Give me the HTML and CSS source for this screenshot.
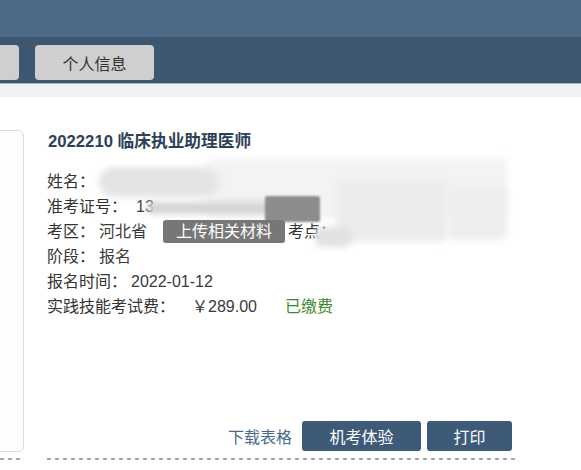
FILE: index.html
```html
<!DOCTYPE html>
<html lang="zh">
<head>
<meta charset="utf-8">
<link rel="stylesheet" href="styles.css">
</head>
<body>
<div class="top"></div>
<nav class="nav">
  <div class="tab tab-cut"></div>
  <div class="tab">个人信息</div>
</nav>
<div class="band"></div>
<main class="main">
  <div class="side">
    <div class="card"></div>
  </div>
  <section class="detail">
    <div class="box">
      <h2 class="title">2022210 临床执业助理医师</h2>
      <div class="rows">
        <div class="row"><span class="lab">姓名：</span><span class="val"></span></div>
        <div class="row"><span class="lab">准考证号：</span><span class="val id">13</span></div>
        <div class="row"><span class="lab">考区：</span><span class="val">河北省</span><span class="upload">上传相关材料</span><span class="lab">考点：</span></div>
        <div class="row"><span class="lab">阶段：</span><span class="val">报名</span></div>
        <div class="row"><span class="lab">报名时间：</span><span class="val">2022-01-12</span></div>
        <div class="row"><span class="lab">实践技能考试费：</span><span class="val fee">￥289.00</span><span class="paid">已缴费</span></div>
      </div>
      <div class="mask m2"></div>
      <div class="mask m6"></div>
      <div class="mask m7"></div>
      <div class="mask m1"></div>
      <div class="mask m3"></div>
      <div class="mask m4"></div>
      <div class="mask m5"></div>
      <div class="actions">
        <a class="link">下载表格</a>
        <span class="btn btn-wide">机考体验</span>
        <span class="btn btn-narrow">打印</span>
      </div>
    </div>
  </section>
</main>
</body>
</html>
```

FILE: styles.css
```css
* { box-sizing: border-box; margin: 0; padding: 0; }
html, body { width: 581px; height: 470px; overflow: hidden; background: #fff; }
body {
  font-family: "Liberation Sans", "Noto Sans CJK SC", sans-serif;
  font-size: 16px;
  color: #333;
}
.top { height: 37px; background: #4d6b89; }
.nav {
  height: 47px;
  background: #3d5771;
  display: flex;
  gap: 16px;
  padding-top: 8px;
  border-bottom: 1px solid #a9b8c6;
}
.tab {
  width: 119px;
  height: 35px;
  background: #cfcfcf;
  border-radius: 4px;
  color: #333;
  display: flex;
  align-items: center;
  justify-content: center;
  font-size: 16px;
}
.tab-cut { margin-left: -100px; }
.band { height: 13px; background: #f0f1f3; }
.main {
  display: flex;
  padding-top: 33px;
  gap: 23px;
}
.side {
  width: 24px;
  padding-bottom: 8px;
  background: repeating-linear-gradient(to right, #aaa 0 4px, transparent 4px 8px) left bottom / 23px 2px no-repeat;
}
.card {
  height: 322px;
  margin-left: -200px;
  width: 224px;
  border: 1px solid #dcdcdc;
  border-radius: 6px;
  background: #fdfdfd;
}
.detail {
  width: 468px;
  padding-bottom: 8px;
  background: repeating-linear-gradient(to right, #aaa 0 4px, transparent 4px 8px) left bottom / 468px 2px no-repeat;
}
.box {
  position: relative;
  height: 322px;
  display: flex;
  flex-direction: column;
  padding-right: 3px;
}
.title {
  font-size: 16.7px;
  font-weight: bold;
  color: #2e4057;
  line-height: 24px;
  margin-left: 1px;
}
.rows { margin-top: 15px; }
.row {
  display: flex;
  align-items: center;
  height: 25px;
  line-height: 25px;
  white-space: nowrap;
}
.lab { color: #333; }
.val { margin-left: 4px; color: #3a3a3a; }
.id { margin-left: 9px; }
.fee { margin-left: 17px; }
.paid { margin-left: 28px; color: #3b8a2b; }
.upload {
  position: relative;
  z-index: 2;
  margin-left: 16px;
  margin-right: 3px;
  background: #777;
  color: #fff;
  border-radius: 3px;
  height: 23px;
  line-height: 23px;
  padding: 0 13px;
}
.mask { position: absolute; filter: blur(3px); border-radius: 6px; }
.m1 { left: 52px; top: 37px; width: 120px; height: 30px; background: #e4e4e4; border-radius: 15px; }
.m2 { left: 160px; top: 28px; width: 300px; height: 60px; background: #f3f3f3; }
.m3 { left: 100px; top: 72px; width: 125px; height: 12px; background: #d4d4d4; border-radius: 2px; }
.m4 { left: 218px; top: 66px; width: 55px; height: 26px; background: #8c8c8c; border-radius: 2px; filter: blur(1px); }
.m5 { left: 268px; top: 97px; width: 36px; height: 20px; background: #e2e2e2; }
.m6 { left: 290px; top: 50px; width: 110px; height: 62px; background: #ececec; }
.m7 { left: 400px; top: 55px; width: 60px; height: 55px; background: #eeeeee; }
.actions {
  margin-top: auto;
  display: flex;
  align-items: center;
  justify-content: flex-end;
  gap: 6px;
  height: 30px;
  margin-bottom: 1px;
}
.link { color: #4a6a8c; margin-right: 4px; }
.btn {
  height: 30px;
  background: #3d5a78;
  color: #fff;
  border-radius: 3px;
  display: flex;
  align-items: center;
  justify-content: center;
}
.btn-wide { width: 119px; }
.btn-narrow { width: 85px; }
```
